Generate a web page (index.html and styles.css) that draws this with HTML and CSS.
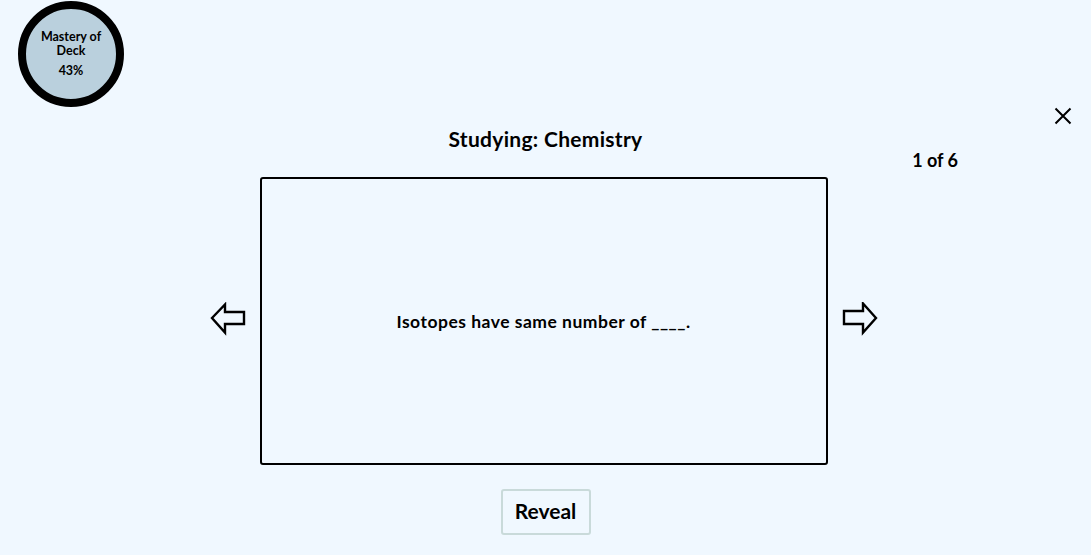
FILE: index.html
```html
<!DOCTYPE html>
<html>
<head>
<meta charset="utf-8">
<link rel="stylesheet" href="styles.css">
</head>
<body>
<div class="page">
  <div class="mastery">
    <div class="mastery-label">Mastery of<br>Deck</div>
    <div class="mastery-value">43%</div>
  </div>
  <button class="close" aria-label="Close">
    <svg width="18" height="18" viewBox="0 0 18 18"><path d="M1.5 1.5 L16.5 16.5 M16.5 1.5 L1.5 16.5" stroke="#000" stroke-width="2" fill="none"/></svg>
  </button>
  <main class="study">
    <h1 class="title">Studying: Chemistry</h1>
    <div class="counter-row"><span class="counter">1 of 6</span></div>
    <div class="card-row">
      <button class="nav">
        <svg width="36" height="34" viewBox="0 0 36 34"><path d="M2 16 L15 2.5 L15 10 L34 10 L34 22 L15 22 L15 30.5 Z" fill="#f0f8ff" stroke="#000" stroke-width="2.4" stroke-linejoin="miter"/></svg>
      </button>
      <div class="card">
        <p class="card-text">Isotopes have same number of ____.</p>
      </div>
      <button class="nav">
        <svg width="36" height="34" viewBox="0 0 36 34"><path d="M34 16 L21 1.5 L21 9 L2 9 L2 22 L21 22 L21 30.5 Z" fill="#f0f8ff" stroke="#000" stroke-width="2.4" stroke-linejoin="miter"/></svg>
      </button>
    </div>
    <div class="actions">
      <button class="reveal">Reveal</button>
    </div>
  </main>
</div>
</body>
</html>
```
FILE: styles.css
```css
html, body {
  margin: 0;
  padding: 0;
  background: #f0f8ff;
}
body {
  font-family: "Lato", "Open Sans", sans-serif;
  color: #000;
  width: 1091px;
  height: 555px;
  overflow: hidden;
}
.page {
  position: relative;
  height: 555px;
}
.mastery {
  position: absolute;
  left: 18px;
  top: 1px;
  width: 90px;
  height: 90px;
  border: 8px solid #000;
  border-radius: 50%;
  background: #bad0dd;
  display: flex;
  flex-direction: column;
  align-items: center;
  justify-content: center;
  text-align: center;
  font-weight: 700;
  font-size: 12.5px;
  line-height: 14px;
}
.mastery-label {
  margin-top: -1px;
}
.mastery-value {
  margin-top: 6px;
}
.close {
  position: absolute;
  right: 19px;
  top: 107px;
  width: 18px;
  height: 18px;
  padding: 0;
  border: 0;
  background: none;
  display: block;
}
.close svg { display: block; }
.study {
  padding-top: 127px;
  display: flex;
  flex-direction: column;
  align-items: center;
}
.title {
  margin: 0;
  font-size: 21px;
  line-height: 24px;
  font-weight: 700;
  letter-spacing: 0.3px;
}
.counter-row {
  align-self: stretch;
  display: flex;
  justify-content: flex-end;
  padding-right: 133px;
}
.counter {
  font-size: 18px;
  line-height: 18px;
  font-weight: 700;
}
.card-row {
  margin-top: 8px;
  margin-left: -4px;
  display: flex;
  align-items: center;
  gap: 14px;
}
.nav {
  padding: 0;
  border: 0;
  background: none;
  width: 36px;
  height: 34px;
  margin-top: -4px;
}
.nav svg { display: block; }
.card {
  width: 564px;
  height: 284px;
  border: 2px solid #000;
  border-radius: 3px;
  display: flex;
  align-items: center;
  justify-content: center;
}
.card-text {
  margin: 0;
  font-size: 17.5px;
  font-weight: 700;
  letter-spacing: 0.5px;
}
.actions {
  margin-top: 24px;
}
.reveal {
  width: 90px;
  height: 46px;
  border: 2px solid #c9dada;
  border-radius: 3px;
  background: #f0f8ff;
  font-family: "Lato", "Open Sans", sans-serif;
  font-size: 21px;
  font-weight: 700;
  color: #000;
  padding: 0 0 4px;
}
```
